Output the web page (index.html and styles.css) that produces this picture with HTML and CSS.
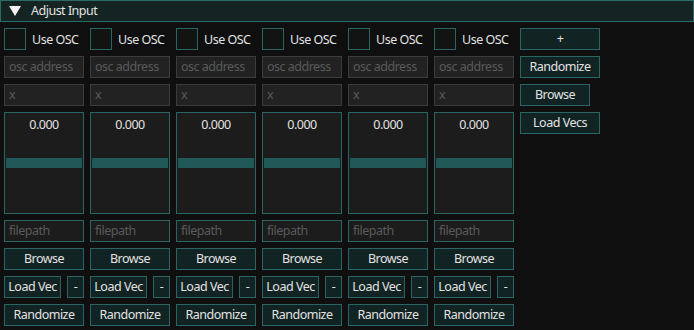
FILE: index.html
```html
<!DOCTYPE html>
<html>
<head>
<meta charset="utf-8">
<link rel="stylesheet" href="styles.css">
</head>
<body>
<div class="header"><span class="tri"></span><span class="title">Adjust Input</span></div>
<div class="grid">
  <div class="col">
    <div class="chkrow"><span class="chk"></span><span>Use OSC</span></div>
    <div class="input ph">osc address</div>
    <div class="input ph">x</div>
    <div class="slider"><div class="val">0.000</div><div class="bar"></div></div>
    <div class="input tealb ph">filepath</div>
    <div class="btn">Browse</div>
    <div class="pair"><div class="btn lv">Load Vec</div><div class="btn minus">-</div></div>
    <div class="btn">Randomize</div>
  </div>
  <div class="col">
    <div class="chkrow"><span class="chk"></span><span>Use OSC</span></div>
    <div class="input ph">osc address</div>
    <div class="input ph">x</div>
    <div class="slider"><div class="val">0.000</div><div class="bar"></div></div>
    <div class="input tealb ph">filepath</div>
    <div class="btn">Browse</div>
    <div class="pair"><div class="btn lv">Load Vec</div><div class="btn minus">-</div></div>
    <div class="btn">Randomize</div>
  </div>
  <div class="col">
    <div class="chkrow"><span class="chk"></span><span>Use OSC</span></div>
    <div class="input ph">osc address</div>
    <div class="input ph">x</div>
    <div class="slider"><div class="val">0.000</div><div class="bar"></div></div>
    <div class="input tealb ph">filepath</div>
    <div class="btn">Browse</div>
    <div class="pair"><div class="btn lv">Load Vec</div><div class="btn minus">-</div></div>
    <div class="btn">Randomize</div>
  </div>
  <div class="col">
    <div class="chkrow"><span class="chk"></span><span>Use OSC</span></div>
    <div class="input ph">osc address</div>
    <div class="input ph">x</div>
    <div class="slider"><div class="val">0.000</div><div class="bar"></div></div>
    <div class="input tealb ph">filepath</div>
    <div class="btn">Browse</div>
    <div class="pair"><div class="btn lv">Load Vec</div><div class="btn minus">-</div></div>
    <div class="btn">Randomize</div>
  </div>
  <div class="col">
    <div class="chkrow"><span class="chk"></span><span>Use OSC</span></div>
    <div class="input ph">osc address</div>
    <div class="input ph">x</div>
    <div class="slider"><div class="val">0.000</div><div class="bar"></div></div>
    <div class="input tealb ph">filepath</div>
    <div class="btn">Browse</div>
    <div class="pair"><div class="btn lv">Load Vec</div><div class="btn minus">-</div></div>
    <div class="btn">Randomize</div>
  </div>
  <div class="col">
    <div class="chkrow"><span class="chk"></span><span>Use OSC</span></div>
    <div class="input ph">osc address</div>
    <div class="input ph">x</div>
    <div class="slider"><div class="val">0.000</div><div class="bar"></div></div>
    <div class="input tealb ph">filepath</div>
    <div class="btn">Browse</div>
    <div class="pair"><div class="btn lv">Load Vec</div><div class="btn minus">-</div></div>
    <div class="btn">Randomize</div>
  </div>
  <div class="col side">
    <div class="btn">+</div>
    <div class="btn">Randomize</div>
    <div class="btn browse">Browse</div>
    <div class="btn">Load Vecs</div>
  </div>
</div>
</body>
</html>
```
FILE: styles.css
```css
html, body {
  margin: 0;
  padding: 0;
  background: #0f0f0f;
  color: #e2e2e2;
  font-family: "Noto Sans", "Open Sans", sans-serif;
  font-size: 12.5px;
  letter-spacing: -0.5px;
}
.header {
  box-sizing: border-box;
  width: 694px;
  height: 22px;
  border: 1px solid #2a6b68;
  background: #132423;
  display: flex;
  align-items: center;
  margin-bottom: 6px;
}
.tri {
  width: 0;
  height: 0;
  margin-left: 8px;
  margin-right: 10px;
  border-left: 6px solid transparent;
  border-right: 6px solid transparent;
  border-top: 10px solid #f2f2f2;
}
.title {
  line-height: 20px;
}
.grid {
  display: flex;
  gap: 6px;
  padding-left: 4px;
}
.col {
  width: 80px;
  display: flex;
  flex-direction: column;
  gap: 6px;
}
.side {
  align-items: flex-start;
}
.chkrow {
  height: 22px;
  display: flex;
  align-items: center;
  gap: 6px;
  white-space: nowrap;
}
.chk {
  box-sizing: border-box;
  width: 22px;
  height: 22px;
  border: 1px solid #2a6464;
  background: #111413;
  flex: none;
}
.input {
  box-sizing: border-box;
  height: 22px;
  border: 1px solid #3c3c3c;
  background: #222222;
  padding: 0 4px;
  line-height: 20px;
  white-space: nowrap;
  overflow: hidden;
}
.ph {
  color: #5a5a5a;
}
.tealb {
  border-color: #2a6464;
  background: #1c1c1c;
}
.slider {
  box-sizing: border-box;
  height: 102px;
  border: 1px solid #2a6464;
  background: #1c1c1c;
  padding: 0 1px;
}
.val {
  text-align: center;
  line-height: 20px;
  margin-top: 2px;
}
.bar {
  height: 10px;
  margin-top: 23px;
  background: #215858;
}
.btn {
  box-sizing: border-box;
  width: 80px;
  height: 22px;
  border: 1px solid #2a6464;
  background: #122323;
  text-align: center;
  line-height: 20px;
  white-space: nowrap;
}
.pair {
  display: flex;
  justify-content: space-between;
}
.lv {
  width: 57px;
}
.minus {
  width: 17px;
}
.browse {
  width: 70px;
}
```
